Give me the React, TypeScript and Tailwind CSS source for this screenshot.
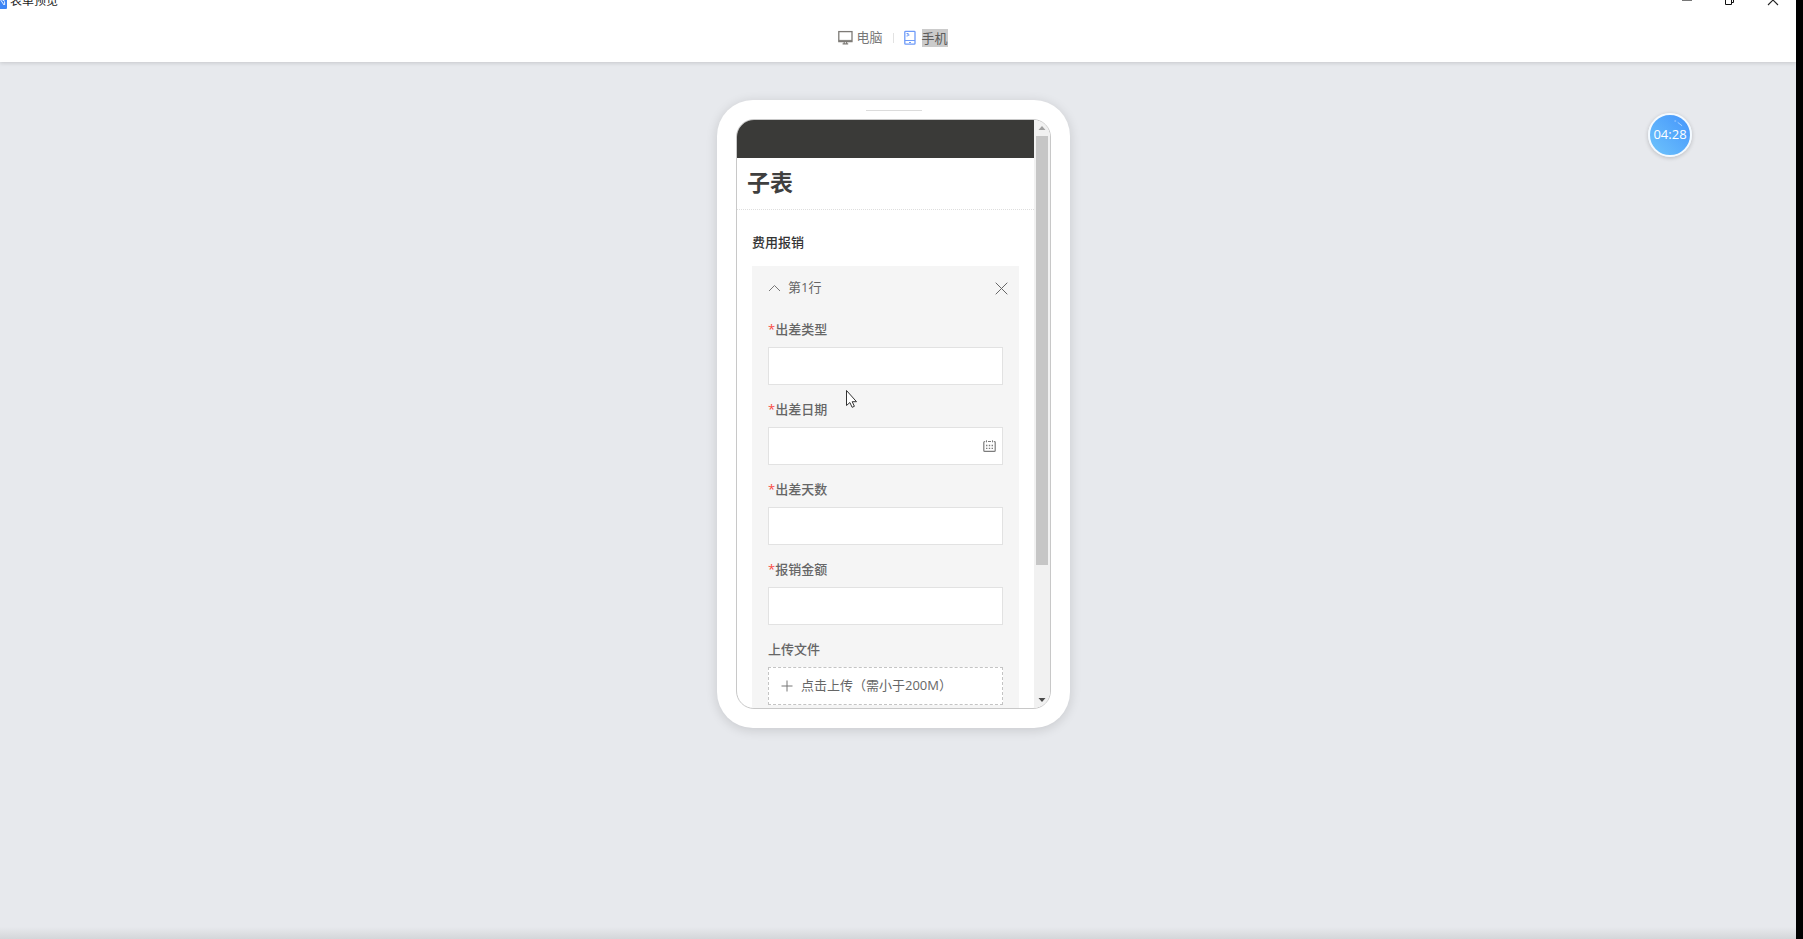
import { useState } from 'react';

type Field = { id: string; label: string; calendar?: boolean };

const fields: Field[] = [
  { id: 'trip-type', label: '出差类型' },
  { id: 'trip-date', label: '出差日期', calendar: true },
  { id: 'trip-days', label: '出差天数' },
  { id: 'amount', label: '报销金额' },
];

function MonitorIcon() {
  return (
    <svg width="15" height="16" viewBox="0 0 15 16" fill="none" stroke="#7d7a76" aria-hidden="true">
      <rect x="0.8" y="1.6" width="13.2" height="10" strokeWidth="1.3" />
      <path d="M0.8 10.4h13.200" strokeWidth="1" />
      <path d="M6.200 11.600v2M8.600 11.600v2M4.600 13.900h5.600" strokeWidth="1.1" />
    </svg>
  );
}

function PhoneIcon() {
  return (
    <svg width="12" height="16" viewBox="0 0 12 16" fill="none" stroke="#6f9bf8" aria-hidden="true">
      <rect x="0.8" y="1.3" width="10.2" height="12.9" rx="0.8" strokeWidth="1.3" />
      <path d="M0.8 10.500h10.200M5 12.500h2" strokeWidth="1.1" />
      <path d="M2.500 3.500h1.500M4 5h1.500M2.500 6h1.200M4 3v3" strokeWidth="1" />
    </svg>
  );
}

function CalendarIcon() {
  return (
    <svg width="13" height="14" viewBox="0 0 13 14" fill="none" stroke="#7c7c7c" aria-hidden="true">
      <path d="M2.200 2.500H1.800a1 1 0 0 0-1 1v7.900a1 1 0 0 0 1 1h9.400a1 1 0 0 0 1-1V3.500a1 1 0 0 0-1-1h-.4" strokeWidth="1.2" />
      <path d="M3.500 1.300v2M9.500 1.300v2M5 2.500h3" strokeWidth="1" />
      <path d="M3 6.500h1.400M5.800 6.500h1.400M8.600 6.500H10M3 9.300h1.400M5.800 9.300h1.400M8.600 9.300H10" strokeWidth="1.3" />
    </svg>
  );
}

function WindowHeader() {
  return (
    <div className="-mt-4 flex h-[33px] items-center justify-between pr-[17px]">
      <div className="flex items-center gap-[3px]">
        <svg width="7" height="16" viewBox="0 0 7 16" aria-hidden="true">
          <path d="M0 0h6a1 1 0 0 1 1 1v14a1 1 0 0 1-1 1H0z" fill="#3f86f5" />
          <path d="M0 6l4 6M2 6.5l3 2M4.6 9v3" stroke="#e3eeff" strokeWidth="1" fill="none" />
        </svg>
        <span className="text-xs text-[#1a1a1a]">表单预览</span>
      </div>
      <div className="flex items-center gap-[31px]">
        <button type="button" aria-label="最小化">
          <svg width="12" height="12" viewBox="0 0 12 12" className="block" aria-hidden="true">
            <path d="M1 5.500h10" stroke="#777" />
          </svg>
        </button>
        <button type="button" aria-label="还原">
          <svg width="12" height="12" viewBox="0 0 12 12" fill="none" stroke="#111" className="block" aria-hidden="true">
            <path d="M1.500 3.500h6v6h-6zM3.500 3.500v-2h6v6h-2" />
          </svg>
        </button>
        <button type="button" aria-label="关闭">
          <svg width="12" height="12" viewBox="0 0 12 12" stroke="#222" strokeWidth="1.1" className="block" aria-hidden="true">
            <path d="M1 0l10 10M11 0l-10 10" />
          </svg>
        </button>
      </div>
    </div>
  );
}

function DeviceTabs({ device, onChange }: { device: string; onChange: (d: string) => void }) {
  return (
    <nav className="flex h-[45px] items-center justify-center pr-[10px] pb-[3px] text-[13px] text-[#777]">
      <button type="button" className="flex items-center gap-[3px]" onClick={() => onChange('pc')}>
        <MonitorIcon />
        <span>电脑</span>
      </button>
      <span className="mx-[10px] h-[10px] w-px bg-[#e2e2e2]" />
      <button type="button" aria-pressed={device === 'phone'} className="flex items-center gap-[6px]" onClick={() => onChange('phone')}>
        <PhoneIcon />
        <span className="bg-[#cbcbcb] leading-[18px] text-[#5c5c5c]">手机</span>
      </button>
    </nav>
  );
}

function FormField({ field }: { field: Field }) {
  return (
    <div className="mb-[14px]">
      <label htmlFor={field.id} className="mb-[8px] block text-[13px] leading-5 font-medium text-[#666]">
        <span className="font-medium text-[#fa4b43]">*</span>
        {field.label}
      </label>
      <div className="flex h-[38px] items-center border border-[#e2e2e2] bg-white pr-[6px]">
        <input id={field.id} type="text" className="h-full min-w-0 flex-1 bg-transparent px-2 text-[13px] outline-none" />
        {field.calendar && (
          <button type="button" aria-label="选择日期">
            <CalendarIcon />
          </button>
        )}
      </div>
    </div>
  );
}

function ScrollTrack() {
  return (
    <div className="flex w-4 shrink-0 flex-col items-center bg-[#f1f1f1]" aria-hidden="true">
      <svg width="16" height="16" viewBox="0 0 16 16" className="shrink-0">
        <path d="M8 6l3.5 4h-7z" fill="#a0a0a0" />
      </svg>
      <div className="h-[429px] w-3 bg-[#c6c6c6]" />
      <svg width="16" height="16" viewBox="0 0 16 16" className="mt-auto shrink-0">
        <path d="M8 10l3.500-4h-7z" fill="#4a4a4a" />
      </svg>
    </div>
  );
}

function PhonePreview() {
  const [open, setOpen] = useState(true);
  return (
    <div className="flex w-[353px] flex-col items-center rounded-[36px] bg-white px-[19px] pb-[19px] shadow-[0_2px_12px_rgba(0,0,0,0.14)]">
      <div className="mt-[10px] mb-[8px] h-px w-14 bg-[#dcdcdc]" />
      <div className="flex h-[590px] w-full overflow-hidden rounded-[18px] border border-[#c8c8c8] bg-white">
        <div className="min-w-0 flex-1 overflow-hidden">
          <div className="h-[38px] bg-[#3a3a38]" />
          <h1 className="flex h-[52px] items-center border-b border-dotted border-[#dedede] pb-[2px] pl-[10px] text-[23px] font-bold text-[#3f3f3f]">
            子表
          </h1>
          <section className="px-[15px] pt-[22px]">
            <h2 className="mb-[14px] text-[13px] leading-5 font-medium text-[#333]">费用报销</h2>
            <div className="bg-[#f5f5f5] px-4 pb-6">
              <div className="-mr-[5px] flex h-[44px] items-center justify-between">
                <button type="button" aria-expanded={open} onClick={() => setOpen(!open)} className="flex items-center gap-[7px] text-[13px] text-[#666]">
                  <svg width="13" height="8" viewBox="0 0 13 8" fill="none" stroke="#777" aria-hidden="true">
                    <path d="M1 7l5.500-5.500L12 7" />
                  </svg>
                  <span>第1行</span>
                </button>
                <button type="button" aria-label="删除">
                  <svg width="13" height="13" viewBox="0 0 13 13" stroke="#666" className="block" aria-hidden="true">
                    <path d="M0.700 0.700l11.600 11.600M12.300 0.700L0.700 12.300" />
                  </svg>
                </button>
              </div>
              {open && (
                <div className="pt-[9px]">
                  {fields.map((f) => (
                    <FormField key={f.id} field={f} />
                  ))}
                  <p className="mb-[8px] text-[13px] leading-5 font-medium text-[#666]">上传文件</p>
                  <button type="button" className="flex h-[38px] w-full items-center gap-[8px] border border-dashed border-[#c4c4c4] bg-white px-[12px] text-[13px] text-[#666]">
                    <svg width="12" height="12" viewBox="0 0 12 12" stroke="#777" aria-hidden="true">
                      <path d="M6 0.500v11M0.500 6h11" />
                    </svg>
                    <span>点击上传（需小于200M）</span>
                  </button>
                </div>
              )}
            </div>
          </section>
        </div>
        <ScrollTrack />
      </div>
    </div>
  );
}

export default function App() {
  const [device, setDevice] = useState('phone');
  return (
    <div className="relative flex h-screen flex-col overflow-hidden border-r-[7px] border-black bg-[#e7e9ed] font-['Open_Sans','Noto_Sans_CJK_SC',sans-serif]">
      <header className="z-10 shrink-0 bg-white shadow-[0_1px_4px_rgba(0,0,0,0.15)]">
        <WindowHeader />
        <DeviceTabs device={device} onChange={setDevice} />
      </header>
      <main className="flex flex-1 items-start justify-center pt-[38px] pr-[9px]">
        <PhonePreview />
      </main>
      <div className="h-3 shrink-0 bg-linear-to-b from-[#e7e9ed] to-[#d4d6d9]" />

      <div className="absolute top-[113px] right-[104px] z-20 flex size-11 items-center justify-center rounded-full border-2 border-[#f4faff] bg-linear-to-tr from-[#6fc4fb] to-[#4594fb] text-[13px] text-white shadow-[0_1px_4px_rgba(0,0,0,0.2)]">
        04:28
        <svg className="absolute top-[5px] right-[7px]" width="9" height="7" viewBox="0 0 9 7" fill="none" stroke="#a9d2ff" strokeLinecap="round" aria-hidden="true">
          <path d="M0.800 1h1M4 2.600l3.800 3" />
        </svg>
      </div>
      <svg className="pointer-events-none absolute top-[389px] left-[845px] z-20" width="13" height="20" viewBox="0 0 13 20" aria-hidden="true">
        <path d="M1.500 1.500v15l3.400-3 2.200 4.800 2.300-1-2.200-4.600h4.300z" fill="#fff" stroke="#333" strokeWidth="1" />
      </svg>
    </div>
  );
}
